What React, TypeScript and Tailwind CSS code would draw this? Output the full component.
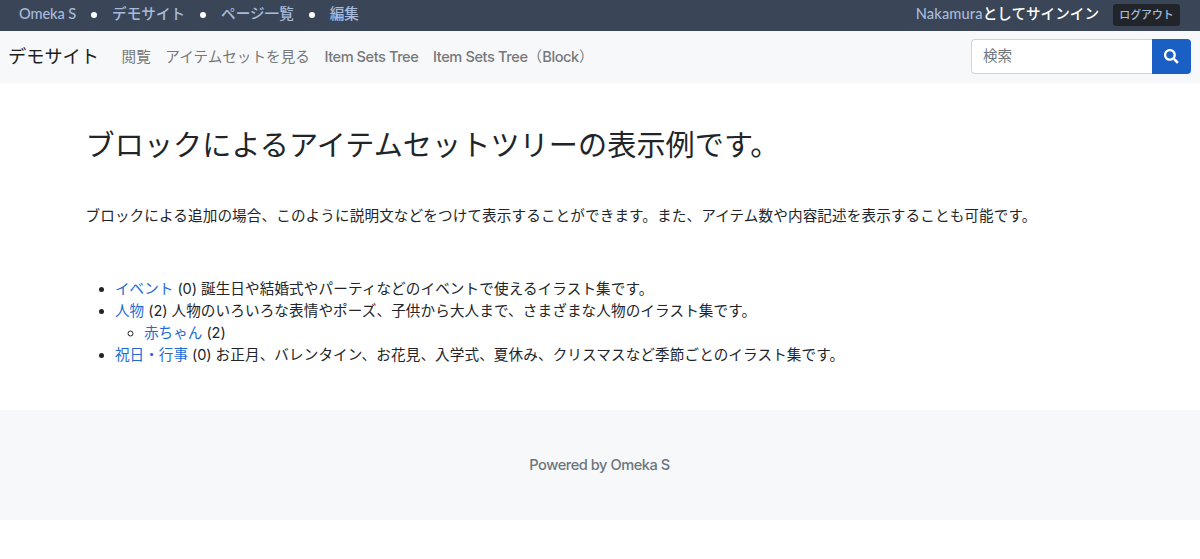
import { FaSearch } from "react-icons/fa";

const userLinks = ["デモサイト", "ページ一覧", "編集"];

export default function App() {
    return (
        <div className="min-h-[559px] bg-white text-[14.6px] leading-[21.9px] text-[#212529] font-['Inter','Noto_Sans_CJK_JP',sans-serif]">
            <UserBar />
            <Navbar />
            <main className="px-[85.5px] h-[327px]">
                <h2 className="pt-[45px] text-[29.1px] leading-[35px] tracking-[0.1px]">
                    ブロックによるアイテムセットツリーの表示例です。
                </h2>
                <p className="pt-[43px] tracking-[0.11px]">
                    ブロックによる追加の場合、このように説明文などをつけて表示することができます。また、アイテム数や内容記述を表示することも可能です。
                </p>
                <ul className="pt-[51px] pl-[29.5px] list-disc">
                    <TreeItem title="イベント" count={0} description="誕生日や結婚式やパーティなどのイベントで使えるイラスト集です。" />
                    <TreeItem title="人物" count={2} description="人物のいろいろな表情やポーズ、子供から大人まで、さまざまな人物のイラスト集です。">
                        <ul className="pl-[29px] list-[circle]">
                            <TreeItem title="赤ちゃん" count={2} />
                        </ul>
                    </TreeItem>
                    <TreeItem title="祝日・行事" count={0} description="お正月、バレンタイン、お花見、入学式、夏休み、クリスマスなど季節ごとのイラスト集です。" />
                </ul>
            </main>
            <footer className="h-[110px] pt-0.5 pr-px flex items-center justify-center bg-[#f7f8fa] font-medium text-[#6c757d] tracking-[-0.46px]">
                Powered by Omeka S
            </footer>
        </div>
    )
}

function UserBar() {
    return (
        <div className="h-[31px] flex items-center justify-between pl-[19px] pr-5 pb-[3px] bg-[#3a4657] text-white font-medium font-['Lato','Noto_Sans_CJK_JP',sans-serif]">
            <div className="flex items-center text-[#a8bbdc]">
                <a className="tracking-[-0.1px]">Omeka S</a>
                {userLinks.map((link) => (
                    <div key={link} className="flex items-center">
                        <span className="size-[6px] mt-px mx-[15px] rounded-full bg-white"></span>
                        <a>{link}</a>
                    </div>
                ))}
            </div>
            <div className="flex items-center">
                <span><a className="text-[#a8bbdc] tracking-[0.15px]">Nakamura</a>としてサインイン</span>
                <a className="ml-[14px] mt-[2px] h-[22px] w-[67px] flex items-center justify-center rounded-[3px] bg-[#212529] text-[10.9px] text-[#a8bbdc]">ログアウト</a>
            </div>
        </div>
    )
}

function Navbar() {
    return (
        <nav className="h-[52px] flex items-center justify-between pl-2 pr-[9px] bg-[#f7f8fa]">
            <div className="flex items-center gap-[14.6px] text-[#777879]">
                <a className="mr-2 text-[18.2px] text-[#1d1e1f]">デモサイト</a>
                <a className="pt-px">閲覧</a>
                <a className="pt-px">アイテムセットを見る</a>
                <a className="pt-px font-medium tracking-[-0.45px]">Item Sets Tree</a>
                <a className="pt-px font-medium tracking-[-0.4px]">Item Sets Tree<span className="font-normal tracking-normal">（</span>Block<span className="font-normal">）</span></a>
            </div>
            <form className="flex h-[35px] -mt-px">
                <input
                    placeholder="検索"
                    className="w-[181px] px-[11px] rounded-l border border-r-0 border-[#ced4da] bg-white placeholder:text-[#6c757d]"
                />
                <button type="button" className="w-[39px] flex items-center justify-center rounded-r bg-[#1a5fc4] text-white">
                    <FaSearch />
                </button>
            </form>
        </nav>
    )
}

interface TreeItemProps {
    title: string;
    count: number;
    description?: string;
    children?: React.ReactNode;
}

function TreeItem({ title, count, description, children }: TreeItemProps) {
    return (
        <li>
            <a className="text-[#1e6bd6]">{title}</a>
            <span className="tracking-[-0.1px]">{` (${count}) `}</span>
            <span className="tracking-[0.1px]">{description}</span>
            {children}
        </li>
    )
}
